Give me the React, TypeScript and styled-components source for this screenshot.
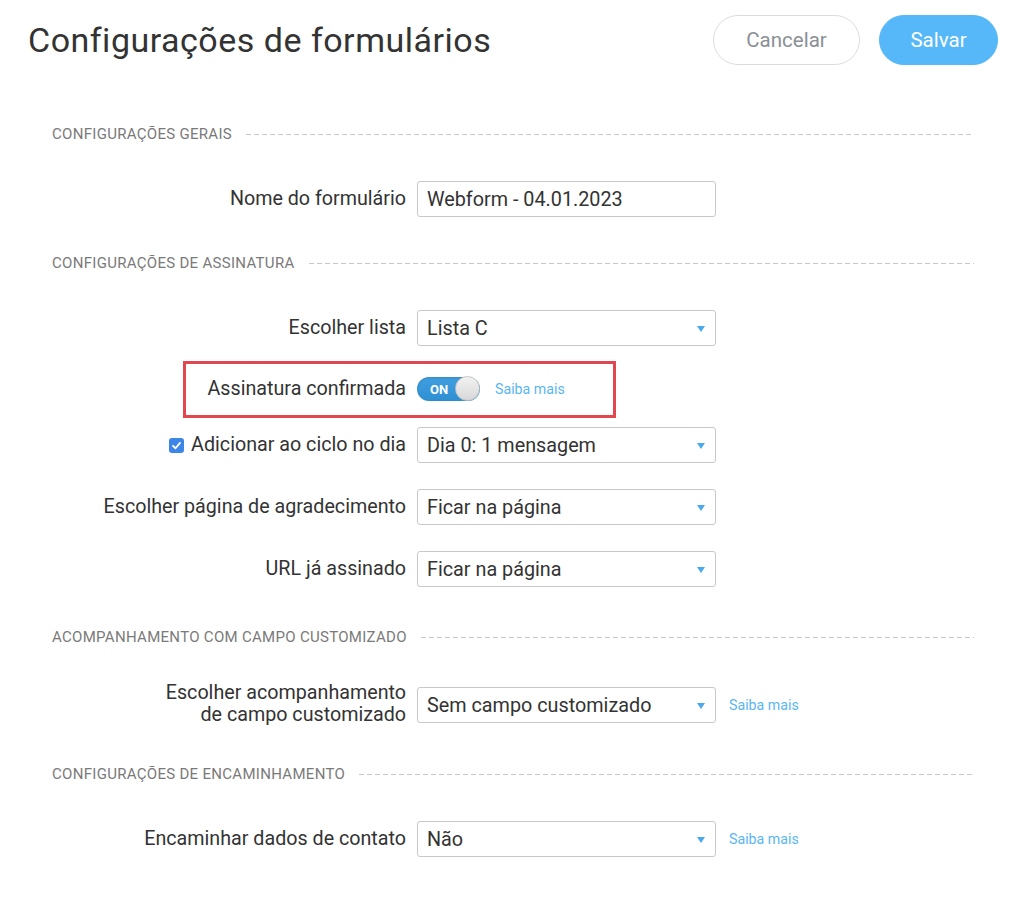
import React from 'react';
import styled, { createGlobalStyle } from 'styled-components';

const GlobalStyle = createGlobalStyle`
  body {
    margin: 0;
    background: #ffffff;
    font-family: Roboto, 'Liberation Sans', Arial, sans-serif;
    color: #333333;
  }
`;

const Page = styled.div`
  width: 1024px;
  padding-bottom: 40px;
`;

const TopBar = styled.div`
  display: flex;
  align-items: center;
  justify-content: space-between;
  padding: 15px 26px 0 28px;
  height: 50px;
`;

const Title = styled.h1`
  margin: 0;
  font-size: 34px;
  font-weight: 400;
  letter-spacing: 0.5px;
  color: #333333;
`;

const Actions = styled.div`
  display: flex;
  gap: 19px;
`;

const Button = styled.button<{ $primary?: boolean }>`
  height: 50px;
  border-radius: 25px;
  font-family: inherit;
  font-size: 20.5px;
  padding: 0;
  width: ${(p) => (p.$primary ? '119px' : '147px')};
  border: 1px solid ${(p) => (p.$primary ? '#56b8f8' : '#dcdcdc')};
  background: ${(p) => (p.$primary ? '#56b8f8' : '#ffffff')};
  color: ${(p) => (p.$primary ? '#ffffff' : '#8a9096')};
`;

const Body = styled.div`
  padding: 0 50px 0 52px;
`;

const Section = styled.section<{ $top: number }>`
  margin-top: ${(p) => p.$top}px;
  display: flex;
  flex-direction: column;
`;

const SectionHeader = styled.div`
  display: flex;
  align-items: center;
  gap: 14px;
  height: 18px;
  margin-bottom: 38px;
  font-size: 15px;
  letter-spacing: 0.3px;
  color: #7a7a7a;
  text-transform: uppercase;
  white-space: nowrap;
`;

const Dashes = styled.span`
  flex: 1;
  height: 1px;
  background: repeating-linear-gradient(to right, #c8c8c8 0 5px, transparent 5px 8px);
`;

const Rows = styled.div`
  display: flex;
  flex-direction: column;
  gap: 26px;
`;

const Row = styled.div<{ $short?: boolean }>`
  position: relative;
  display: grid;
  grid-template-columns: 354px 299px auto;
  column-gap: 11px;
  align-items: center;
  min-height: ${(p) => (p.$short ? '34px' : '36px')};
  margin-bottom: ${(p) => (p.$short ? '-5px' : '0')};
`;

const Label = styled.label<{ $multi?: boolean }>`
  display: flex;
  justify-content: flex-end;
  align-items: center;
  gap: 7px;
  text-align: right;
  font-size: 19.7px;
  line-height: ${(p) => (p.$multi ? '22px' : '20px')};
  margin-top: ${(p) => (p.$multi ? '-2px' : '0')};
  color: #333333;
`;

const Field = styled.div`
  position: relative;
  box-sizing: border-box;
  height: 36px;
  border: 1px solid #c8c8c8;
  border-radius: 3px;
  padding: 0 30px 0 9px;
  display: flex;
  align-items: center;
  font-size: 19.8px;
  color: #333333;
  white-space: nowrap;
`;

const Caret = styled.span`
  position: absolute;
  right: 10px;
  top: 15px;
  width: 0;
  height: 0;
  border-left: 4.5px solid transparent;
  border-right: 4.5px solid transparent;
  border-top: 6px solid #4aa9ec;
`;

const Help = styled.a`
  font-size: 14.2px;
  color: #5ab6f2;
  text-decoration: none;
  margin-left: 2px;
`;

const ToggleCell = styled.div`
  display: flex;
  align-items: center;
  gap: 13px;
`;

const Toggle = styled.div`
  position: relative;
  width: 63px;
  height: 24px;
  border-radius: 12px;
  background: linear-gradient(#3f9fe0, #2f8fd3);
  box-shadow: inset 0 1px 2px rgba(0, 0, 0, 0.15);
  display: flex;
  align-items: center;
  padding-left: 13px;
  box-sizing: border-box;
  color: #ffffff;
  font-size: 13px;
  font-weight: 700;
`;

const Knob = styled.span`
  position: absolute;
  right: 0;
  top: -1px;
  width: 25px;
  height: 25px;
  border-radius: 50%;
  box-sizing: border-box;
  background: linear-gradient(#f2f2f2, #d8d8d8);
  border: 1px solid #c4c4c4;
`;

const Highlight = styled.div`
  position: absolute;
  left: 131px;
  top: -11px;
  width: 433px;
  height: 57px;
  box-sizing: border-box;
  border: 3px solid #e2474f;
  pointer-events: none;
`;

const Check = styled.span`
  width: 15px;
  height: 15px;
  border-radius: 3px;
  background: #3b86e6;
  display: inline-flex;
  align-items: center;
  justify-content: center;
`;

const SelectField: React.FC<{ value: string }> = ({ value }) => (
  <Field>
    {value}
    <Caret />
  </Field>
);

export default function App() {
  return (
    <Page>
      <GlobalStyle />
      <TopBar>
        <Title>Configurações de formulários</Title>
        <Actions>
          <Button>Cancelar</Button>
          <Button $primary>Salvar</Button>
        </Actions>
      </TopBar>
      <Body>
        <Section $top={60}>
          <SectionHeader>
            Configurações gerais
            <Dashes />
          </SectionHeader>
          <Rows>
            <Row>
              <Label>Nome do formulário</Label>
              <Field>Webform - 04.01.2023</Field>
            </Row>
          </Rows>
        </Section>

        <Section $top={37}>
          <SectionHeader>
            Configurações de assinatura
            <Dashes />
          </SectionHeader>
          <Rows>
            <Row>
              <Label>Escolher lista</Label>
              <SelectField value="Lista C" />
            </Row>
            <Row $short>
              <Highlight />
              <Label>Assinatura confirmada</Label>
              <ToggleCell>
                <Toggle>
                  ON
                  <Knob />
                </Toggle>
                <Help href="#">Saiba mais</Help>
              </ToggleCell>
            </Row>
            <Row>
              <Label>
                <Check>
                  <svg width="11" height="11" viewBox="0 0 12 12">
                    <path d="M2.2 6.3 L4.9 9 L9.9 3.2" fill="none" stroke="#fff" strokeWidth="2" strokeLinecap="round" strokeLinejoin="round" />
                  </svg>
                </Check>
                Adicionar ao ciclo no dia
              </Label>
              <SelectField value="Dia 0: 1 mensagem" />
            </Row>
            <Row>
              <Label>Escolher página de agradecimento</Label>
              <SelectField value="Ficar na página" />
            </Row>
            <Row>
              <Label>URL já assinado</Label>
              <SelectField value="Ficar na página" />
            </Row>
          </Rows>
        </Section>

        <Section $top={41}>
          <SectionHeader>
            Acompanhamento com campo customizado
            <Dashes />
          </SectionHeader>
          <Rows>
            <Row>
              <Label $multi>
                Escolher acompanhamento
                <br />
                de campo customizado
              </Label>
              <SelectField value="Sem campo customizado" />
              <Help href="#">Saiba mais</Help>
            </Row>
          </Rows>
        </Section>

        <Section $top={39}>
          <SectionHeader>
            Configurações de encaminhamento
            <Dashes />
          </SectionHeader>
          <Rows>
            <Row>
              <Label>Encaminhar dados de contato</Label>
              <SelectField value="Não" />
              <Help href="#">Saiba mais</Help>
            </Row>
          </Rows>
        </Section>
      </Body>
    </Page>
  );
}
